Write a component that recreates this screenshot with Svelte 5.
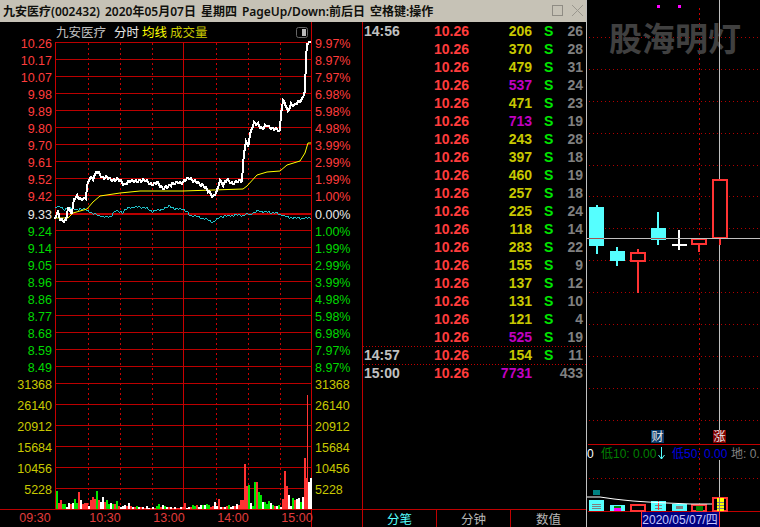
<script>
  const priceTicks = [
    ['10.26', '9.97%', 42.5], ['10.17', '8.97%', 59.5], ['10.07', '7.97%', 76.5], ['9.98', '6.98%', 93.5],
    ['9.89', '5.98%', 110.5], ['9.80', '4.98%', 127.5], ['9.70', '3.99%', 144.5], ['9.61', '2.99%', 161.5],
    ['9.52', '1.99%', 178.5], ['9.42', '1.00%', 195.5], ['9.33', '0.00%', 213.5], ['9.24', '1.00%', 230.5],
    ['9.14', '1.99%', 247.5], ['9.05', '2.99%', 264.5], ['8.96', '3.99%', 281.5], ['8.86', '4.98%', 298.5],
    ['8.77', '5.98%', 315.5], ['8.68', '6.98%', 332.5], ['8.59', '7.97%', 349.5], ['8.49', '8.97%', 366.5]
  ];
  const volTicks = [['31368', 383.5], ['26140', 404.5], ['20912', 425.5], ['15684', 446.5], ['10456', 467.5], ['5228', 488.5]];
  const dotted = [88.5, 120.5, 152.5, 216.5, 248.5, 280.5];
  const times = [['09:30', 35], ['10:30', 105], ['13:00', 169], ['14:00', 233], ['15:00', 297]];

  // rough shape read off the chart, jag() adds the minute-to-minute wiggle
  const pricePts = '55,220 56,216 58,212 60,219 63,220 66,221 68,208 70,211 72,212 74,199 77,197 80,199 86,198 87,187 90,177 93,178 96,173 99,173 102,177 107,178 115,180 120,180 125,185 131,180 138,182 143,179 150,184 157,183 163,188 168,187 172,183 180,183 190,178 197,183 203,185 207,190 213,196 217,192 220,180 223,185 227,180 233,183 242,180 244,153 246,142 248,147 251,130 254,123 258,125 262,128 267,126 275,129 280,131 281,112 283,100 285,104 288,112 291,104 295,105 300,101 303,97 305,90 306,60 307,44 311,42';
  const avgPts = '55,218 68,218 73,213 87,209 93,202 100,196 120,193 140,191 183,191 243,189 247,186 257,175 267,172 280,171 287,165 300,161 305,153 308,143 311,143';
  const diffPts = '55,208 60,206 65,210 70,207 77,210 83,208 90,212 100,216 110,217 115,211 122,212 130,207 143,207 153,211 163,209 170,206 175,209 183,209 190,215 203,218 213,222 220,217 233,215 243,215 250,214 257,211 277,213 287,217 300,218 311,218';

  function jag(pts, amp) {
    const p = pts.split(' ').map((s) => s.split(',').map(Number));
    const out = [];
    for (let i = 0; i < p.length - 1; i++) {
      const [x0, y0] = p[i];
      const [x1, y1] = p[i + 1];
      for (let x = x0; x < x1; x++) {
        const y = y0 + ((y1 - y0) * (x - x0)) / (x1 - x0);
        const n = Math.sin(x * 1.7) * amp + Math.sin(x * 0.63) * amp * 0.6;
        out.push(x + ',' + Math.round(y + n));
      }
    }
    out.push(p[p.length - 1].join(','));
    return out.join(' ');
  }

  const volData = '18g 6r 9r 5g 5g 2w 6w 5r 6w 10g 6g 17r 9w 5r 6r 6r 3w 9r 12r 10r 18g 9r 7w 12w 7r 9g 5g 6w 5g 5r 8g 3r 2w 3w 4w 3r 6w 3r 2w 2r 3g 2w 2r 2w 1r 3w 1w 1r 2w 1r 3g 5g 2r 4w 3g 2w 2r 2w 1r 2w 1r 1r 2w 2r 6r 1w 2w 2r 4g 3g 4r 2w 4w 4g 4w 5g 4g 2r 3r 7w 3w 10r 2w 2r 2w 3r 4g 2w 3w 3r 5w 4r 9r 9r 45r 23r 24g 6w 3g 27g 27r 17g 14g 7w 7g 5g 8g 6w 4g 3r 3w 4g 2w 10r 38r 23r 14w 3w 11g 9r 10w 11w 7g 12w 51r 31r 27w 31w';
  const volColor = { g: '#00e600', r: '#ff3333', w: '#ffffff' };
  const volBars = volData.split(' ').map((b, i) => ({
    x: 56 + i * 2,
    h: parseInt(b),
    c: volColor[b.at(-1)]
  }));

  const rows1456 = [
    ['206', 'y', '26'], ['370', 'y', '28'], ['479', 'y', '31'], ['537', 'm', '24'], ['471', 'y', '23'], ['713', 'm', '19'],
    ['243', 'y', '28'], ['397', 'y', '18'], ['460', 'y', '19'], ['257', 'y', '18'], ['225', 'y', '24'], ['118', 'y', '14'],
    ['283', 'y', '22'], ['155', 'y', '9'], ['137', 'y', '12'], ['131', 'y', '10'], ['121', 'y', '4'], ['525', 'm', '19']
  ];
  const ticks = [
    ...rows1456.map((t, i) => ({ time: i === 0 ? '14:56' : '', vol: t[0], tone: t[1], side: 'S', n: t[2] })),
    { time: '14:57', vol: '154', tone: 'y', side: 'S', n: '11', rule: true },
    { time: '15:00', vol: '7731', tone: 'm', side: '', n: '433', rule: true }
  ];

  const titleParts = ['九安医疗(002432)', '2020年05月07日', '星期四', 'PageUp/Down:前后日', '空格键:操作'];
  const tabs = ['分笔', '分钟', '数值'];
  const klineGrid = [37, 69, 101, 133, 165, 196, 228, 260, 292, 324, 356, 388, 420];
</script>

<div class="window">
  <header class="titlebar">
    <div class="title">
      {#each titleParts as part}
        <span>{part}</span>
      {/each}
    </div>
    <svg class="winbtns" width="36" height="22" viewBox="0 0 36 22">
      <rect x="2.5" y="5.5" width="10" height="10" fill="none" stroke="#8f8c84" />
      <path d="M22 5l11 11M33 5L22 16" stroke="#9a978e" fill="none" />
    </svg>
  </header>

  <main class="body">
    <svg class="intraday" width="362" height="505" viewBox="0 22 362 505">
      <g class="legend">
        <text x="56" y="37" fill="#c0c0c0">九安医疗</text>
        <text x="114" y="37" fill="#e8e8e8">分时</text>
        <text x="142" y="37" fill="#ffff00">均线</text>
        <text x="170" y="37" fill="#c8c800">成交量</text>
      </g>
      <rect x="296.5" y="27.5" width="11" height="10" rx="2" fill="none" stroke="#666" />
      <rect x="302" y="29" width="4" height="7" fill="#bbb" />

      <g class="grid" shape-rendering="crispEdges">
        {#each priceTicks as t}
          <line x1="55" x2="311" y1={t[2]} y2={t[2]} stroke-width={t[0] === '9.33' ? 2 : 1} />
        {/each}
        {#each volTicks as t}
          <line x1="55" x2="311" y1={t[1]} y2={t[1]} />
        {/each}
        <line x1="0" x2="362" y1="509.5" y2="509.5" />
        <line class="vert" x1="55.5" x2="55.5" y1="42" y2="509" />
        <line class="vert" x1="183.5" x2="183.5" y1="42" y2="509" />
        <line class="vert" x1="311.5" x2="311.5" y1="22" y2="527" />
        {#each dotted as x}
          <line class="vdots" x1={x} x2={x} y1="43" y2="509" />
        {/each}
      </g>

      <g class="axis">
        {#each priceTicks as t, i}
          <text class="end" x="52" y={t[2] + 5} fill={i < 10 ? '#ff3c3c' : i === 10 ? '#e8e8e8' : '#00d800'}>{t[0]}</text>
          <text x="315" y={t[2] + 5} fill={i < 10 ? '#ff3c3c' : i === 10 ? '#e8e8e8' : '#00d800'}>{t[1]}</text>
        {/each}
        {#each volTicks as t}
          <text class="end" x="52" y={t[1] + 5} fill="#c8c800">{t[0]}</text>
          <text x="315" y={t[1] + 5} fill="#c8c800">{t[0]}</text>
        {/each}
        {#each times as t}
          <text class="mid" x={t[1]} y="522" fill="#e03c3c">{t[0]}</text>
        {/each}
      </g>

      <polyline points={jag(diffPts, 0.8)} fill="none" stroke="#20c0c8" shape-rendering="crispEdges" />
      <polyline points={avgPts} fill="none" stroke="#ffff00" />
      <polyline points={jag(pricePts, 1.1)} fill="none" stroke="#ffffff" stroke-width="2" shape-rendering="crispEdges" />

      <g shape-rendering="crispEdges">
        {#each volBars as b}
          <rect x={b.x} y={509 - b.h} width="2" height={b.h} fill={b.c} />
        {/each}
        <rect x="307" y="395" width="1" height="114" fill="#ff3333" />
      </g>
    </svg>

    <section class="ticks">
      <div class="rows">
        {#each ticks as t}
          <div class="row" class:rule={t.rule}>
            <span class="time">{t.time}</span>
            <span class="price">10.26</span>
            <span class="vol {t.tone}">{t.vol}</span>
            <span class="side">{t.side}</span>
            <span class="count">{t.n}</span>
          </div>
        {/each}
      </div>
      <nav class="tabs">
        {#each tabs as tab, i}
          <span class="tab" class:active={i === 0}>{tab}</span>
        {/each}
      </nav>
    </section>

    <aside class="kline">
      <svg width="174" height="527" viewBox="586 0 174 527">
        <g shape-rendering="crispEdges">
          {#each klineGrid as y}
            <line class="hdots" x1="589" x2="760" y1={y + 0.5} y2={y + 0.5} />
          {/each}
          <line class="vdots" x1="699.5" x2="699.5" y1="8" y2="511" />
        </g>
        <text class="mark" x="609" y="51">股海明灯</text>
        <rect x="657" y="5" width="3" height="3" fill="#ff00ff" />
        <rect x="678" y="5" width="3" height="3" fill="#ff00ff" />

        <g shape-rendering="crispEdges">
          <line x1="719.5" x2="719.5" y1="0" y2="430" stroke="#c0c0c0" />
          <line x1="719.5" x2="719.5" y1="460" y2="498" stroke="#c0c0c0" />
          <line x1="586.5" x2="586.5" y1="0" y2="527" stroke="#c0c0c0" />

          <rect x="596" y="205" width="2" height="49" fill="#55ffff" />
          <rect x="589" y="207" width="15" height="39" fill="#55ffff" />
          <rect x="616" y="247" width="2" height="19" fill="#55ffff" />
          <rect x="610" y="251" width="15" height="10" fill="#55ffff" />
          <rect x="637" y="249" width="2" height="44" fill="#ff3333" />
          <rect x="631" y="253" width="14" height="8" fill="#000" stroke="#ff3333" stroke-width="2" />
          <rect x="657" y="212" width="2" height="33" fill="#55ffff" />
          <rect x="651" y="228" width="15" height="12" fill="#55ffff" />
          <rect x="678" y="230" width="2" height="20" fill="#fff" />
          <rect x="672" y="244" width="15" height="2" fill="#fff" />
          <rect x="698" y="240" width="2" height="12" fill="#ff3333" />
          <rect x="692" y="239" width="14" height="5" fill="#000" stroke="#ff3333" stroke-width="2" />
          <rect x="719" y="238" width="2" height="7" fill="#ff3333" />
          <rect x="713" y="180" width="14" height="58" fill="#000" stroke="#ff3333" stroke-width="2" />
          <line x1="586" x2="760" y1="238.5" y2="238.5" stroke="#c0c0c0" />
          <line x1="589" x2="604" y1="238.5" y2="238.5" stroke="#a05050" />
          <line x1="651" x2="666" y1="238.5" y2="238.5" stroke="#a05050" />

          <line class="solid" x1="588" x2="760" y1="444.5" y2="444.5" />
          <line class="solid" x1="588" x2="760" y1="511.5" y2="511.5" />
          <line class="hdots" x1="589" x2="760" y1="478.5" y2="478.5" />
        </g>

        <rect x="651" y="430" width="13" height="13" fill="#0a3a6a" />
        <text class="badge" x="657.5" y="441">财</text>
        <rect x="713" y="430" width="13" height="13" fill="#800000" />
        <text class="badge" x="719.5" y="441">涨</text>

        <text class="ind" x="587" y="458" fill="#fff">0</text>
        <text class="ind" x="601" y="458" fill="#008000">低10: 0.00</text>
        <path d="M661.5 447v12M658.5 455l3 4 3-4" fill="none" stroke="#55ffff" />
        <text class="ind" x="672" y="458" fill="#0000e0">低50: 0.00</text>
        <text class="ind" x="731" y="458" fill="#808080">地: 0.</text>

        <g shape-rendering="crispEdges">
          <rect x="593" y="490" width="7" height="5" fill="#008080" />
          <rect x="589" y="500" width="15" height="11" fill="#55ffff" />
          <path d="M592 504h9M592 506h9M592 508h9" stroke="#808080" />
          <rect x="610" y="505" width="15" height="6" fill="#55ffff" />
          <rect x="614" y="506" width="7" height="2" fill="#008000" />
          <rect x="614" y="508" width="7" height="3" fill="#ff00ff" />
          <rect x="631" y="505" width="14" height="6" fill="#000" stroke="#ff3333" stroke-width="2" />
          <rect x="651" y="501" width="15" height="10" fill="#55ffff" />
          <path d="M655 505h7M655 508h7" stroke="#808080" />
          <rect x="658" y="501" width="1" height="9" fill="#ff3333" />
          <rect x="672" y="504" width="15" height="7" fill="#55ffff" />
          <rect x="676" y="506" width="7" height="3" fill="#808080" />
          <rect x="692" y="505" width="14" height="6" fill="#000" stroke="#ff3333" stroke-width="2" />
          <rect x="696" y="506" width="7" height="5" fill="#008000" />
          <rect x="713" y="498" width="14" height="13" fill="#000" stroke="#ff3333" stroke-width="2" />
          <rect x="717" y="498" width="7" height="13" fill="#ffff00" />
          <path d="M717 502h7M717 505h7M717 508h7" stroke="#808080" />
          <rect x="719" y="498" width="1" height="13" fill="#808080" />
        </g>
        <polyline points="587,497 600,497 607,498 614,499 623,500 633,501 648,502 667,503 690,504 712,504" fill="none" stroke="#fff" />

        <rect x="641" y="512" width="78" height="15" fill="#000080" />
        <path d="M641.5 511v16M719.5 511v16" stroke="#ff3333" fill="none" shape-rendering="crispEdges" />
        <text class="datecap" x="680" y="524">2020/05/07/四</text>
      </svg>
    </aside>
  </main>
</div>

<style>
  :global(body) {
    background: #000;
    overflow: hidden;
  }

  .window {
    width: 760px;
    height: 527px;
    display: flex;
    flex-direction: column;
    background: #000;
    position: relative;
  }

  .titlebar {
    width: 586px;
    height: 22px;
    flex-shrink: 0;
    display: flex;
    align-items: center;
    justify-content: space-between;
    background: #c6c2b6;
    color: #10100c;
    white-space: nowrap;
    padding-left: 3px;
    box-sizing: border-box;
  }

  .title {
    display: flex;
    gap: 5px;
    font: 600 12px "Noto Sans", "Noto Sans CJK SC", sans-serif;
  }

  .winbtns {
    flex-shrink: 0;
  }

  .body {
    flex: 1;
    display: flex;
    min-height: 0;
  }

  /* kline pane reaches up beside the title bar */
  .kline {
    position: absolute;
    top: 0;
    right: 0;
    width: 174px;
    height: 527px;
  }

  svg {
    display: block;
  }

  .intraday {
    flex-shrink: 0;
  }

  .grid line {
    stroke: #bb0000;
  }

  .grid .vert {
    stroke: #c80000;
  }

  .grid .vdots,
  .vdots {
    stroke: #c80000;
    stroke-dasharray: 2 3;
  }

  .hdots {
    stroke: #b00000;
    stroke-dasharray: 1 3;
  }

  .solid {
    stroke: #c00000;
  }

  .axis text {
    font: 12.5px "Liberation Sans", "Noto Sans CJK SC", sans-serif;
  }

  .legend text {
    font: 12.5px "Noto Sans CJK SC", sans-serif;
  }

  .end {
    text-anchor: end;
  }

  .mid {
    text-anchor: middle;
  }

  .ticks {
    width: 224px;
    border-left: 1px solid #c00000;
    display: flex;
    flex-direction: column;
    box-sizing: border-box;
    font: 700 14px "Liberation Sans", sans-serif;
  }

  .rows {
    flex: 1;
  }

  .row {
    height: 18px;
    display: grid;
    grid-template-columns: 67px 38px 63px 20px 31px;
    align-items: center;
    padding-left: 1px;
    box-sizing: border-box;
    line-height: 18px;
  }

  .rule {
    background: repeating-linear-gradient(90deg, #c00000 0 1px, transparent 1px 3px) top / 100% 1px no-repeat;
  }

  .time {
    color: #c0c0c0;
  }

  .price {
    color: #ff3c3c;
    text-align: right;
  }

  .vol {
    text-align: right;
  }

  .y {
    color: #c8c800;
  }

  .m {
    color: #c000c0;
  }

  .side {
    color: #00e600;
    padding-left: 12px;
  }

  .count {
    color: #808080;
    text-align: right;
  }

  .tabs {
    height: 18px;
    display: grid;
    grid-template-columns: 74px 74px 75px;
    border-top: 1px solid #c00000;
    box-sizing: border-box;
    font: 12.5px "Noto Sans CJK SC", sans-serif;
    color: #b8b8b8;
  }

  .tab {
    text-align: center;
    border-right: 1px solid #c00000;
    line-height: 17px;
  }

  .tab:last-child {
    border-right: none;
  }

  .active {
    color: #55ffff;
  }

  .mark {
    font: 700 33px "Noto Sans CJK SC", sans-serif;
    fill: #404040;
  }

  .badge {
    font: 12px "Noto Sans CJK SC", sans-serif;
    fill: #e8e8e8;
    text-anchor: middle;
  }

  .ind {
    font: 12px "Liberation Sans", "Noto Sans CJK SC", sans-serif;
  }

  .datecap {
    font: 12px "Liberation Sans", "Noto Sans CJK SC", sans-serif;
    fill: #c8c8ff;
    text-anchor: middle;
  }
</style>
